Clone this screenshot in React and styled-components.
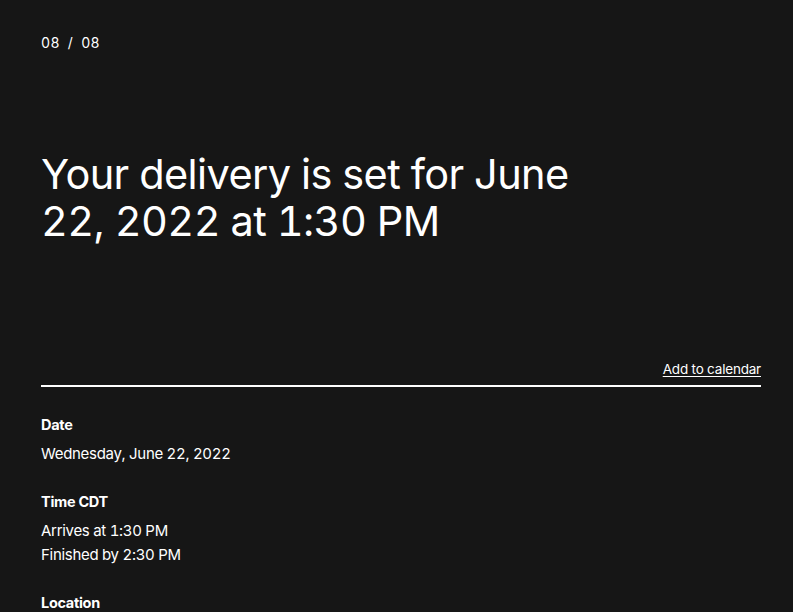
import React from "react";
import styled, { createGlobalStyle } from "styled-components";

const Global = createGlobalStyle`
  html, body { margin: 0; padding: 0; background: #161616; }
  body { font-family: Inter, "Liberation Sans", Arial, sans-serif; color: #fff; }
`;

const Page = styled.div`
  min-height: 612px;
  padding: 34px 32px 0 41px;
  box-sizing: border-box;
  background: #161616;
`;

const Counter = styled.div`
  font-size: 14px;
  letter-spacing: 0.3px;
  line-height: 18px;
  word-spacing: 4px;
  font-variant-numeric: tabular-nums;
`;

const Heading = styled.h1`
  margin: 99px 0 0;
  font-size: 41.5px;
  font-weight: 400;
  line-height: 47px;
  letter-spacing: -0.6px;
  max-width: 560px;
  font-variant-numeric: tabular-nums;
`;

const CalendarRow = styled.div`
  display: flex;
  justify-content: flex-end;
  margin-top: 116px;
  padding-bottom: 8px;
  border-bottom: 2px solid #fff;
`;

const CalendarLink = styled.a`
  font-size: 13.5px;
  color: #fff;
  text-decoration: underline;
  text-underline-offset: 2px;
  letter-spacing: -0.2px;
`;

const Details = styled.dl`
  margin: 29px 0 0;
  display: flex;
  flex-direction: column;
  gap: 27px;
`;

const Group = styled.div`
  display: flex;
  flex-direction: column;
`;

const Label = styled.dt`
  font-size: 14.5px;
  font-weight: 700;
  letter-spacing: -0.3px;
  line-height: 18px;
  margin-bottom: 8px;
`;

const Value = styled.dd`
  margin: 0;
  font-size: 15px;
  letter-spacing: -0.3px;
  line-height: 24px;
  font-variant-numeric: tabular-nums;
`;

export default function App() {
  return (
    <>
      <Global />
      <Page>
        <Counter>08 / 08</Counter>
        <Heading>Your delivery is set for June 22, 2022 at 1:30 PM</Heading>
        <CalendarRow>
          <CalendarLink href="#">Add to calendar</CalendarLink>
        </CalendarRow>
        <Details>
          <Group>
            <Label>Date</Label>
            <Value>Wednesday, June 22, 2022</Value>
          </Group>
          <Group>
            <Label>Time CDT</Label>
            <Value>Arrives at 1:30 PM</Value>
            <Value>Finished by 2:30 PM</Value>
          </Group>
          <Group>
            <Label>Location</Label>
          </Group>
        </Details>
      </Page>
    </>
  );
}
